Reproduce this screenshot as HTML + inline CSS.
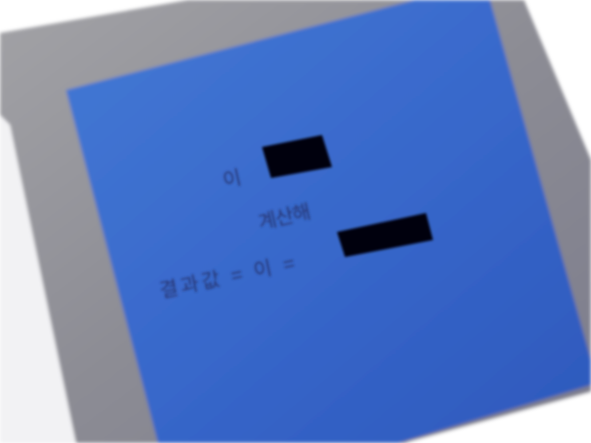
<!DOCTYPE html>
<html><head><meta charset="utf-8"><style>
html,body{margin:0;padding:0;width:591px;height:443px;overflow:hidden;background:#fff}
svg{display:block}
</style></head><body>
<svg width="591" height="443" viewBox="0 0 591 443" xmlns="http://www.w3.org/2000/svg">
<defs>
<linearGradient id="g" x1="0" y1="0" x2="1" y2="1">
<stop offset="0" stop-color="#a2a2a6"/><stop offset="0.5" stop-color="#8c8c94"/><stop offset="1" stop-color="#7c7c8c"/>
</linearGradient>
<linearGradient id="b" x1="0" y1="0" x2="1" y2="1">
<stop offset="0" stop-color="#4479d4"/><stop offset="0.5" stop-color="#3868cb"/><stop offset="1" stop-color="#2d58bc"/>
</linearGradient>
<filter id="bl"><feGaussianBlur stdDeviation="1.8"/></filter>
<filter id="bl2"><feGaussianBlur stdDeviation="1.2"/></filter>
</defs>
<g filter="url(#bl)">
<polygon points="0,33 188,0 524,0 591,160 591,443 0,443" fill="url(#g)"/>
<polygon points="0,115 10,125 76,443 0,443" fill="#f2f2f4"/>
<polygon points="591,392 405,443 591,443" fill="#fff"/>
<polygon points="66,90 415,0 490,0 591,360 591,385 398,443 158,443" fill="url(#b)"/>
</g>
<g filter="url(#bl2)" fill="#050510">
<polygon points="262,147 322,135 332,167 271,178"/>
<polygon points="337,232 426,213 433,240 345,257"/>
</g>
<g filter="url(#bl2)" fill="#263672" font-family="'Liberation Sans','Noto Sans CJK KR',sans-serif" font-size="20">
<text x="222" y="185" transform="rotate(-13 235 175)">이</text>
<text x="257" y="222" transform="rotate(-13 292 212)" letter-spacing="-1">계산해</text>
<text x="160" y="298" transform="rotate(-12 160 292)" letter-spacing="3">결과값 = 이 =</text>
</g>
</svg>
</body></html>
